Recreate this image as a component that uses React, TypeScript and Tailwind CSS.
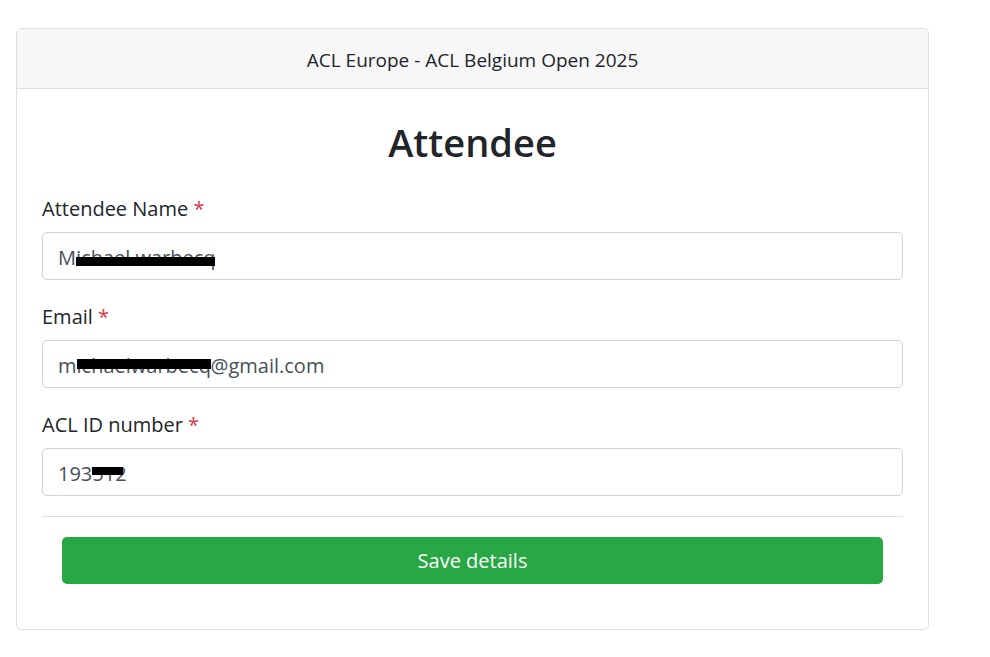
import React from "react";

function Label({ text }: { text: string }) {
  return (
    <div className="h-[30px] pt-[3px] leading-[27px] mb-[10px] text-[20px]">
      {text} <span className="text-[#dc3545]">*</span>
    </div>
  );
}

function Redact({ text, w, top, h }: { text: string; w: number; top: number; h: number }) {
  return (
    <span className="relative inline-block whitespace-nowrap align-bottom" style={{ width: w }}>
      {text}
      <span className="absolute left-0 bg-black" style={{ top, height: h, width: w }} />
    </span>
  );
}

function Field({ label, children }: { label: string; children: React.ReactNode }) {
  return (
    <div className="mb-[20px]">
      <Label text={label} />
      <div className="h-[48px] border border-[#ced4da] rounded-[5px] px-[15px] pt-[3px] flex items-center text-[20px] text-[#495057] whitespace-nowrap">
        <div className="leading-[30px]">{children}</div>
      </div>
    </div>
  );
}

export default function App() {
  return (
    <div className="min-h-screen bg-white font-['Open_Sans',sans-serif] text-[#212529]">
      <div className="pt-[28px] pl-[16px]">
        <div className="w-[913px] border border-[#dfdfdf] rounded-[5px] bg-white">
          <div className="h-[60px] pt-[3px] bg-[#f7f7f7] border-b border-[#dfdfdf] rounded-t-[5px] flex items-center justify-center text-[19px]">
            ACL Europe - ACL Belgium Open 2025
          </div>
          <div className="p-[25px]">
            <h2 className="text-[38px] font-semibold leading-[48px] pt-[4px] h-[48px] text-center mb-[30px]">Attendee</h2>
            <Field label="Attendee Name">
              M<Redact text="ichael warbecq" w={139} top={14} h={9} />
            </Field>
            <Field label="Email">
              m<Redact text="ichaelwarbecq" w={134} top={8} h={10} />@gmail.com
            </Field>
            <Field label="ACL ID number">
              193<Redact text="512" w={31} top={8} h={8} />
            </Field>
            <div className="border-t border-[#dfdfdf]" />
            <button className="mt-[20px] mb-[20px] mx-[20px] w-[821px] h-[47px] rounded-[5px] bg-[#28a745] text-white text-[20px] flex items-center justify-center">
              Save details
            </button>
          </div>
        </div>
      </div>
    </div>
  );
}
